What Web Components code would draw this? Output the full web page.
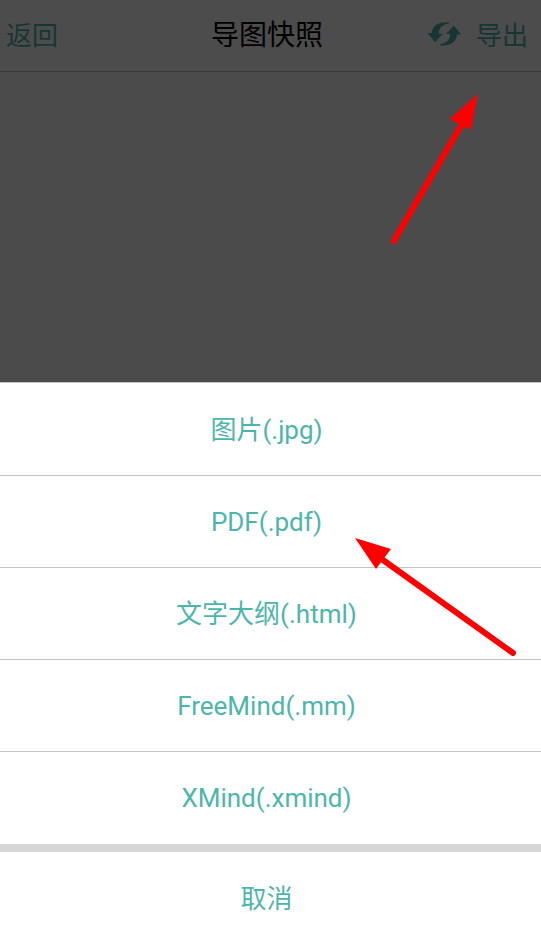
<!DOCTYPE html>
<html lang="zh-CN">
<head>
<meta charset="utf-8">
<meta name="viewport" content="width=device-width, initial-scale=1">
<title>导图快照</title>
<style>
html, body {
  height: 100%;
}

body {
  margin: 0;
  font-family: Roboto, "Noto Sans CJK SC", sans-serif;
  --accent: #4db6ac;
  --line: #c4c4c4;
}
</style>
</head>
<body>
<snapshot-page>
  <app-bar slot="bar" heading="导图快照">
    <bar-button slot="start">返回</bar-button>
    <bar-button slot="end" label="刷新">
      <refresh-icon></refresh-icon>
    </bar-button>
    <bar-button slot="end">导出</bar-button>
  </app-bar>
  <action-sheet slot="sheet" cancel-text="取消">
    <sheet-item>图片(.jpg)</sheet-item>
    <sheet-item>PDF(.pdf)</sheet-item>
    <sheet-item>文字大纲(.html)</sheet-item>
    <sheet-item>FreeMind(.mm)</sheet-item>
    <sheet-item>XMind(.xmind)</sheet-item>
  </action-sheet>
  <pointer-arrow slot="marks" class="export" kind="up"></pointer-arrow>
  <pointer-arrow slot="marks" class="pdf" kind="left"></pointer-arrow>
</snapshot-page>

<script>
/**
 * SnapshotPage
 * Page frame: app bar on top, backdrop over it, sheet at the bottom.
 */
class SnapshotPage extends HTMLElement {
  constructor() {
    super();
    this.attachShadow({ mode: 'open' });
    this.shadowRoot.innerHTML = `
      <style>
        :host {
          display: flex;
          flex-direction: column;
          justify-content: space-between;
          position: relative;
          min-height: 100%;
          overflow: hidden;
          background: #fcfcfc;
        }

        .backdrop {
          position: absolute;
          inset: 0;
          background: rgba(0, 0, 0, 0.7);
        }

        .sheet {
          position: relative;
        }

        ::slotted(pointer-arrow) {
          position: absolute;
        }

        ::slotted(.export) {
          top: 90px;
          right: 60px;
        }

        ::slotted(.pdf) {
          bottom: 274px;
          right: 21px;
        }
      </style>
      <slot name="bar"></slot>
      <div class="backdrop"></div>
      <div class="sheet"><slot name="sheet"></slot></div>
      <slot name="marks"></slot>
    `;
  }
}

/**
 * AppBar
 * Attributes: heading
 * Slots: start, end
 */
class AppBar extends HTMLElement {
  constructor() {
    super();
    this.attachShadow({ mode: 'open' });
    this.shadowRoot.innerHTML = `
      <style>
        :host {
          display: block;
        }

        header {
          display: grid;
          grid-template-columns: 1fr auto 1fr;
          align-items: center;
          height: 71px;
          padding: 0 13px 0 6px;
          background: #fff;
          border-bottom: 1px solid var(--line);
        }

        h1 {
          margin: 0;
          font-size: 28px;
          line-height: 36px;
          font-weight: 400;
          color: #000;
        }

        .start,
        .end {
          display: flex;
          align-items: center;
          gap: 14px;
        }

        .end {
          justify-content: flex-end;
        }
      </style>
      <header>
        <div class="start"><slot name="start"></slot></div>
        <h1>${this.getAttribute('heading') || ''}</h1>
        <div class="end"><slot name="end"></slot></div>
      </header>
    `;
  }
}

class BarButton extends HTMLElement {
  constructor() {
    super();
    this.attachShadow({ mode: 'open' });
    this.shadowRoot.innerHTML = `
      <style>
        :host {
          display: inline-flex;
        }

        button {
          display: flex;
          align-items: center;
          padding: 0;
          border: none;
          background: none;
          font-family: inherit;
          font-size: 26px;
          line-height: 36px;
          color: var(--accent);
          cursor: pointer;
        }
      </style>
      <button type="button"><slot></slot></button>
    `;
    const label = this.getAttribute('label');
    if (label) {
      this.shadowRoot.querySelector('button').setAttribute('aria-label', label);
    }
  }
}

class RefreshIcon extends HTMLElement {
  constructor() {
    super();
    this.attachShadow({ mode: 'open' });
    this.shadowRoot.innerHTML = `
      <style>
        :host {
          display: block;
        }

        svg {
          display: block;
          fill: currentColor;
        }
      </style>
      <svg width="35" height="30" viewBox="0 0 35 30" aria-hidden="true">
        <path d="M22 1.4C14 .2 5.4 3 4.8 12H.6L8 21.2 15.8 12.7H11.6C11.4 7.6 15.5 3.4 22 2.4Z"/>
        <path transform="rotate(180 17.4 12.8)" d="M22 1.4C14 .2 5.4 3 4.8 12H.6L8 21.2 15.8 12.7H11.6C11.4 7.6 15.5 3.4 22 2.4Z"/>
      </svg>
    `;
  }
}

/**
 * ActionSheet
 * Attributes: cancel-text
 * Events: sheet-cancel
 */
class ActionSheet extends HTMLElement {
  constructor() {
    super();
    this.attachShadow({ mode: 'open' });
    this.shadowRoot.innerHTML = `
      <style>
        :host {
          display: block;
          background: #d8d8d8;
        }

        .list {
          padding-bottom: 1px;
          background: #fff;
          border-top: 1px solid var(--line);
        }

        .cancel {
          display: block;
          width: 100%;
          height: 82px;
          margin-top: 8px;
          padding: 12px 8px 0 0;
          border: none;
          background: #fff;
          font-family: inherit;
          font-size: 26px;
          line-height: 36px;
          color: var(--accent);
          cursor: pointer;
        }
      </style>
      <div class="list"><slot></slot></div>
      <button type="button" class="cancel">${this.getAttribute('cancel-text') || ''}</button>
    `;

    this.shadowRoot.querySelector('.cancel').addEventListener('click', () => {
      this.dispatchEvent(new CustomEvent('sheet-cancel', { bubbles: true, composed: true }));
    });
  }
}

class SheetItem extends HTMLElement {
  constructor() {
    super();
    this.attachShadow({ mode: 'open' });
    this.shadowRoot.innerHTML = `
      <style>
        :host {
          display: block;
        }

        button {
          display: block;
          box-sizing: border-box;
          width: 100%;
          height: 92px;
          padding: 0 8px 0 0;
          border: none;
          border-top: 1px solid var(--line);
          background: #fff;
          font-family: inherit;
          font-size: 26px;
          line-height: 36px;
          color: var(--accent);
          cursor: pointer;
        }

        /* the list draws the line above the first row */
        :host(:first-child) button {
          border-top-color: transparent;
        }
      </style>
      <button type="button"><slot></slot></button>
    `;
  }
}

// Red callout arrows
const ARROWS = {
  up: {
    width: 92,
    height: 156,
    line: 'M5 151 72 36',
    head: '89,4 61,29 82,40'
  },
  left: {
    width: 165,
    height: 122,
    line: 'M158 115 28 22',
    head: '0,0 36,11 21,31'
  }
};

class PointerArrow extends HTMLElement {
  constructor() {
    super();
    const arrow = ARROWS[this.getAttribute('kind')] || ARROWS.up;
    this.attachShadow({ mode: 'open' });
    this.shadowRoot.innerHTML = `
      <style>
        :host {
          display: block;
          pointer-events: none;
        }

        svg {
          display: block;
        }
      </style>
      <svg width="${arrow.width}" height="${arrow.height}" aria-hidden="true">
        <path d="${arrow.line}" stroke="#f00" stroke-width="6" stroke-linecap="round"/>
        <polygon points="${arrow.head}" fill="#f00"/>
      </svg>
    `;
  }
}

// Register components
customElements.define('snapshot-page', SnapshotPage);
customElements.define('app-bar', AppBar);
customElements.define('bar-button', BarButton);
customElements.define('refresh-icon', RefreshIcon);
customElements.define('action-sheet', ActionSheet);
customElements.define('sheet-item', SheetItem);
customElements.define('pointer-arrow', PointerArrow);
</script>
</body>
</html>
